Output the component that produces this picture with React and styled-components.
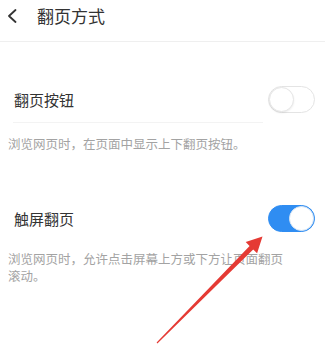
import React from 'react'
import styled, { createGlobalStyle } from 'styled-components'

const Global = createGlobalStyle`
  html, body { margin: 0; padding: 0; background: #fff; }
  body { font-family: "Noto Sans CJK SC", "Noto Sans", sans-serif; }
`

const Page = styled.div`
  position: relative;
  width: 325px;
  height: 363px;
  overflow: hidden;
  background: #fff;
`

const Header = styled.div`
  height: 42px;
  box-sizing: border-box;
  display: flex;
  align-items: flex-start;
  padding: 5px 0 0 8px;
  border-bottom: 1px solid #efefef;
`

const Back = styled.svg`
  width: 10px;
  height: 22px;
  margin-right: 19px;
`

const Title = styled.div`
  font-size: 17px;
  line-height: 22px;
  color: #333;
`

const Section = styled.div`
  margin-top: ${p => p.$top}px;
`

const Row = styled.div`
  height: 46px;
  display: flex;
  align-items: center;
  justify-content: space-between;
  padding: 0 10px 0 14px;
`

const Label = styled.div`
  font-size: 15px;
  color: #333;
`

const Divider = styled.div`
  height: 1px;
  margin: 0 62px 0 13px;
  background: #f3f3f3;
`

const Desc = styled.div`
  margin-top: ${p => p.$top}px;
  padding-left: 8px;
  max-width: 284px;
  font-size: 12.5px;
  line-height: 17px;
  color: #a3a3a3;
`

const Track = styled.div`
  position: relative;
  width: 47px;
  height: 27px;
  box-sizing: border-box;
  border-radius: 14px;
  background: ${p => (p.$on ? '#2f8df2' : '#fff')};
  border: 1px solid ${p => (p.$on ? '#2f8df2' : '#e4e4e4')};
`

const Knob = styled.div`
  position: absolute;
  top: 0;
  left: ${p => (p.$on ? '20px' : '0')};
  width: 25px;
  height: 25px;
  box-sizing: border-box;
  border-radius: 50%;
  background: #fff;
  border: 1px solid ${p => (p.$on ? '#d9e6f4' : '#e6e6e6')};
  box-shadow: ${p => (p.$on ? 'none' : '0 1px 2px rgba(0,0,0,0.08)')};
`

const Arrow = styled.svg`
  position: absolute;
  left: 0;
  top: 0;
  pointer-events: none;
`

function Toggle({ on }) {
  return (
    <Track $on={on}>
      <Knob $on={on} />
    </Track>
  )
}

export default function App() {
  return (
    <Page>
      <Global />
      <Header>
        <Back viewBox="0 0 10 22">
          <polyline points="7.5,5 1,11 7.5,17" fill="none" stroke="#333" strokeWidth="1.8" strokeLinecap="round" strokeLinejoin="round" />
        </Back>
        <Title>翻页方式</Title>
      </Header>

      <Section $top={34}>
        <Row>
          <Label>翻页按钮</Label>
          <Toggle on={false} />
        </Row>
        <Divider />
        <Desc $top={12}>浏览网页时，在页面中显示上下翻页按钮。</Desc>
      </Section>

      <Section $top={43}>
        <Row>
          <Label>触屏翻页</Label>
          <Toggle on />
        </Row>
        <Desc $top={9}>浏览网页时，允许点击屏幕上方或下方让页面翻页滚动。</Desc>
      </Section>

      <Arrow width="325" height="363" viewBox="0 0 325 363">
        <polygon
          points="156.6,342.6 249.6,245.9 245.7,242.1 262.5,236.5 257.1,253.3 253.2,249.5 157.4,343.4"
          fill="#e53a34"
        />
      </Arrow>
    </Page>
  )
}
